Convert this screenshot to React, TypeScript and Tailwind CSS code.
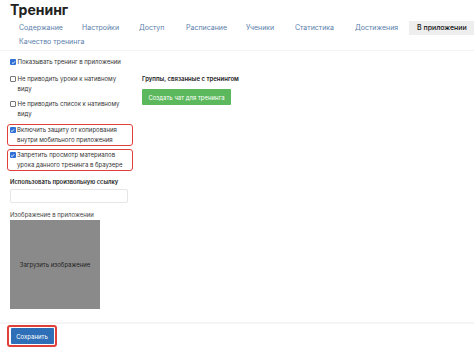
import React from "react";

const font = { fontFamily: "Inter, 'Noto Sans', sans-serif" };

function Box({ checked }: { checked: boolean }) {
  return checked ? (
    <span className="mt-[2px] flex h-[6px] w-[6px] shrink-0 items-center justify-center rounded-[1px] bg-[#2f6fd6]">
      <svg viewBox="0 0 10 10" className="h-[5px] w-[5px]">
        <path d="M2 5.2 L4.2 7.3 L8 2.8" fill="none" stroke="white" strokeWidth="1.8" />
      </svg>
    </span>
  ) : (
    <span className="mt-[2px] h-[6px] w-[6px] shrink-0 rounded-[1px] border border-[#777] bg-white" />
  );
}

function Check({ checked, text }: { checked: boolean; text: string }) {
  return (
    <div className="flex items-start gap-[1.5px] text-[6px] leading-[10px] text-[#333]">
      <Box checked={checked} />
      <span className="w-[112px]">{text}</span>
    </div>
  );
}

const tabs: [string, string][] = [
  ["Содержание", "w-[63px]"],
  ["Настройки", "w-[57px]"],
  ["Доступ", "w-[47px]"],
  ["Расписание", "w-[60px]"],
  ["Ученики", "w-[49px]"],
  ["Статистика", "w-[60px]"],
  ["Достижения", "w-[62px]"],
];

export default function App() {
  return (
    <div className="h-[347px] w-[474px] overflow-hidden bg-white" style={font}>
      <div className="h-[21px] pl-[10px] pt-[1px] text-[14px] font-bold leading-[18px] text-[#222]">Тренинг</div>
      <div className="pl-[11px] text-[7px]">
        <div className="flex">
          {tabs.map(([t, w]) => (
            <div key={t} className={`${w} flex h-[14px] shrink-0 items-center whitespace-nowrap pl-[8px] text-[#5a80ab]`}>
              {t}
            </div>
          ))}
          <div className="flex h-[14px] flex-1 items-center whitespace-nowrap bg-[#eeeeee] pl-[8px] font-medium text-[#111]">
            В приложении
          </div>
        </div>
        <div className="flex">
          <div className="flex h-[14px] items-center pl-[8px] text-[#5a80ab]">Качество тренинга</div>
        </div>
      </div>
      <div className="mt-[1px] h-[1px] w-full bg-[#f3f3f3]" />

      <div className="flex pl-[10px] pt-[6px]">
        <div className="flex w-[123px] flex-col">
          <Check checked text="Показывать тренинг в приложении" />
          <div className="mt-[7px]">
            <Check checked={false} text="Не приводить уроки к нативному виду" />
          </div>
          <div className="mt-[5px]">
            <Check checked={false} text="Не приводить список к нативному виду" />
          </div>
          <div className="-ml-[3px] mt-[5px] h-[22px] w-[126px] rounded-[3px] border-[1.5px] border-[#e0403a] pl-[1.5px]">
            <Check checked text="Включить защиту от копирования внутри мобильного приложения" />
          </div>
          <div className="-ml-[3px] mt-[3px] h-[22px] w-[126px] rounded-[3px] border-[1.5px] border-[#e0403a] pl-[1.5px]">
            <Check checked text="Запретить просмотр материалов урока данного тренинга в браузере" />
          </div>
          <div className="mt-[6px] whitespace-nowrap text-[5.8px] font-semibold leading-[10px] text-[#222]">
            Использовать произвольную ссылку
          </div>
          <div className="mt-[2px] h-[14px] w-[118px] rounded-[2px] border border-[#e6e6e6] bg-white" />
          <div className="mt-[7px] text-[6px] leading-[10px] text-[#444]">Изображение в приложении</div>
          <div className="flex h-[89px] w-[90px] items-center justify-center bg-[#8a8a8a] text-[6px] text-[#222]">
            Загрузить изображение
          </div>
        </div>
        <div className="ml-[9px] flex flex-col pt-[17px]">
          <div className="whitespace-nowrap text-[6px] font-semibold leading-[10px] text-[#222]">
            Группы, связанные с тренингом
          </div>
          <div className="mt-[5px] flex h-[16px] w-[89px] items-center justify-center rounded-[1px] bg-[#5cb85c] text-[6px] text-white">
            Создать чат для тренинга
          </div>
        </div>
      </div>

      <div className="mt-[13px] h-[2px] w-full bg-[#f5f5f5]" />
      <div className="ml-[7px] mt-[1px] flex h-[22px] w-[50px] items-center justify-center rounded-[3px] border-2 border-[#e0403a] bg-white">
        <div className="flex h-[16px] w-[43px] items-center justify-center rounded-[1px] bg-[#2f6fb7] text-[6px] text-white">
          Сохранить
        </div>
      </div>
    </div>
  );
}
